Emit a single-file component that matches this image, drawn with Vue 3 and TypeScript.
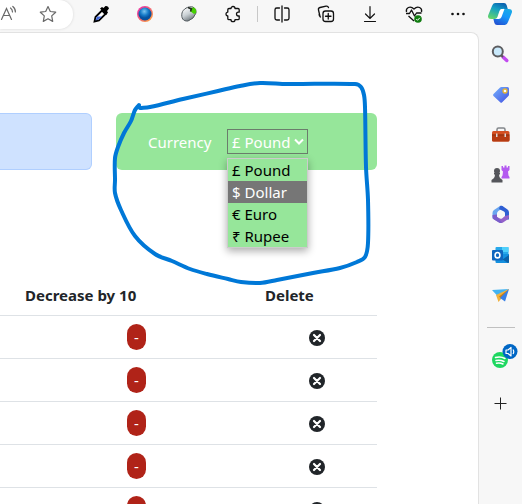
<script setup lang="ts">
import { computed, ref } from 'vue'

interface Currency {
  symbol: string
  name: string
}

const currencies: Currency[] = [
  { symbol: '£', name: 'Pound' },
  { symbol: '$', name: 'Dollar' },
  { symbol: '€', name: 'Euro' },
  { symbol: '₹', name: 'Rupee' },
]
const selected = ref('Pound')
const highlighted = ref('Dollar')
const rows = ref<number[]>([1, 2, 3, 4, 5])

function removeRow(id: number) {
  rows.value = rows.value.filter((r) => r !== id)
}

// Pen stroke drawn over the page, smoothed through its sample points.
const stroke: [number, number][] = [
  [139, 105], [135, 110], [131, 121], [124, 133], [118, 147], [115, 158], [115, 180],
  [115, 193], [121, 210], [135, 236], [155, 254], [172, 261], [190, 269], [207, 274],
  [228, 279], [241, 282], [260, 283], [277, 280], [313, 273], [340, 268], [357, 262],
  [365, 257], [368, 243], [368, 200], [366, 167], [365, 107], [364, 95], [361, 87],
  [355, 84], [287, 84], [260, 83], [240, 86], [218, 91], [183, 99], [150, 107], [140, 108],
]
const strokePath = computed(() => {
  const p = stroke
  let d = `M${p[0][0]} ${p[0][1]}`
  for (let i = 0; i < p.length - 1; i++) {
    const a = p[Math.max(0, i - 1)]
    const b = p[i]
    const c = p[i + 1]
    const e = p[Math.min(p.length - 1, i + 2)]
    const len = Math.hypot(c[0] - b[0], c[1] - b[1])
    const t1 = len / (len + Math.hypot(b[0] - a[0], b[1] - a[1])) / 3
    const t2 = len / (len + Math.hypot(e[0] - c[0], e[1] - c[1])) / 3
    d += `C${b[0] + (c[0] - a[0]) * t1} ${b[1] + (c[1] - a[1]) * t1} ${c[0] - (e[0] - b[0]) * t2} ${c[1] - (e[1] - b[1]) * t2} ${c[0]} ${c[1]}`
  }
  return d
})
</script>

<template>
  <div class="browser">
    <header class="toolbar">
      <div class="address">
        <button class="tool" aria-label="Read aloud">
          <svg width="20" height="20" viewBox="0 0 20 20" fill="none" stroke="#696969" stroke-width="1.2" stroke-linecap="round">
            <path d="M1.500 15.500 6.500 4.500 11.500 15.500M3.200 11.500h6.600M10.500 4q2 1.500 2 4M12.800 2.500q2.800 2.300 2.600 5.500" />
          </svg>
        </button>
        <button class="tool" aria-label="Add to favorites">
          <svg width="20" height="20" viewBox="0 0 20 20" fill="none" stroke="#696969" stroke-width="1.2" stroke-linejoin="round">
            <path d="m10 2.500 2.300 5 5.400.7-4 3.700 1 5.500L10 14.800l-4.700 2.600 1-5.500-4-3.700 5.400-.7z" />
          </svg>
        </button>
      </div>
      <div class="tools">
        <button class="tool" aria-label="Color picker">
          <svg width="20" height="20" viewBox="0 0 20 20">
            <path d="M11 6.500 4.500 13 3.500 17.500 8 16.500 14.500 10z" fill="#fff" stroke="#000" stroke-width="1.800" />
            <path d="M6 12.500h5l-3.500 3-3 1z" fill="#4268d8" />
            <path d="m9 4.500 2-1.500 1.500 1L14.500 2q3-.5 3.500 2.500l-2 2.500 1 1.500-1.800 2.500z" />
          </svg>
        </button>
        <button class="tool" aria-label="Sphere extension">
          <svg width="20" height="20" viewBox="0 0 20 20">
            <defs>
              <linearGradient id="ring" x1="0" y1="0" x2="1" y2="1"><stop offset=".2" stop-color="#ed3c9b" /><stop offset="1" stop-color="#ffac30" /></linearGradient>
              <radialGradient id="ball" cx=".45" cy=".3"><stop offset="0" stop-color="#7dc5ef" /><stop offset=".6" stop-color="#187dca" /><stop offset="1" stop-color="#0752a0" /></radialGradient>
            </defs>
            <circle cx="10" cy="10" r="8" fill="url(#ring)" /><circle cx="10" cy="10" r="6.500" fill="url(#ball)" />
          </svg>
        </button>
        <button class="tool" aria-label="Mouse extension">
          <svg width="20" height="20" viewBox="0 0 20 20">
            <defs><linearGradient id="mouse" x1=".2" y1="0" x2=".7" y2="1"><stop offset="0" stop-color="#fff" /><stop offset=".5" stop-color="#c9d0d4" /><stop offset="1" stop-color="#626a70" /></linearGradient></defs>
            <path d="M3 9C4 5 9 2 14 3q4 2 3 6-2 6-8 8c-5 .5-7-3-6-8z" fill="url(#mouse)" stroke="#555c60" />
            <path d="m11 4 4-.5q3 2 2 5.500l-2 1-4-3z" fill="#45d000" /><path d="m9 3.500 3.500 1.500-1 2.500" fill="none" stroke="#242a25" stroke-width="1.500" />
          </svg>
        </button>
        <button class="tool" aria-label="Extensions">
          <svg width="20" height="20" viewBox="0 0 20 20" fill="none" stroke="#111" stroke-width="1.300" stroke-linejoin="round">
            <path d="M6 4.500h2a2 2 0 0 1 4 0h3q1.200 0 1.200 1.200v2.500h-.8a1.900 1.900 0 0 0 0 3.800h.8v2.500q0 1.200-1.200 1.200h-3a2 2 0 0 1-4 0H6q-1.200 0-1.200-1.200V12H4.500a2 2 0 0 1 0-3.900h.3V5.700q0-1.200 1.200-1.200z" />
          </svg>
        </button>
        <span class="divider"></span>
        <button class="tool" aria-label="Split screen">
          <svg width="20" height="20" viewBox="0 0 20 20" fill="none" stroke="#111" stroke-width="1.300" stroke-linecap="round">
            <path d="M7.500 4H4.800Q3 4 3 5.800v8.400Q3 16 4.800 16h2.700M12.500 4h2.700Q17 4 17 5.800v8.400q0 1.800-1.800 1.800h-2.700M10 2v16" />
          </svg>
        </button>
        <button class="tool" aria-label="Collections">
          <svg width="20" height="20" viewBox="0 0 20 20" fill="none" stroke="#111" stroke-width="1.300" stroke-linecap="round">
            <path d="M4 12.500 2.500 6Q2 4 4 3.500l6-1.300q2-.4 2.500 1.500M4.500 13q-1.500-1-1.400-3" /><rect x="7" y="7" width="10.500" height="10.500" rx="2.500" fill="#f7f7f7" /><path d="M12.250 9.500v5.500M9.500 12.250H15" />
          </svg>
        </button>
        <button class="tool" aria-label="Downloads">
          <svg width="20" height="20" viewBox="0 0 20 20" fill="none" stroke="#111" stroke-width="1.200" stroke-linecap="round">
            <path d="M10 2.500v12M5.500 10l4.500 4.500 4.500-4.500M4.500 17.500h11" />
          </svg>
        </button>
        <button class="tool" aria-label="Browser essentials">
          <svg width="20" height="20" viewBox="0 0 20 20" fill="none" stroke="#111" stroke-width="1.300" stroke-linejoin="round">
            <path d="M2.500 8C1.500 4 6 1 10 5c4-4 8.500-1 7.500 3M2 9.500h3.500l2-3.500 3 6 2-3h5M4.500 12l5.500 5" />
            <circle cx="14" cy="15" r="3.800" fill="#107c10" stroke="none" /><path d="m12.300 15 1.200 1.300 2.300-2.500" stroke="#fff" stroke-width="1" />
          </svg>
        </button>
        <button class="tool" aria-label="Settings and more">
          <svg width="20" height="20" viewBox="0 0 20 20" fill="#111"><circle cx="4.500" cy="10" r="1.300" /><circle cx="10" cy="10" r="1.300" /><circle cx="15.500" cy="10" r="1.300" /></svg>
        </button>
      </div>
      <button class="copilot" aria-label="Copilot">
        <svg width="24" height="24" viewBox="0 0 24 24">
          <defs>
            <linearGradient id="cpa" x1=".7" y1="0" x2=".2" y2="1"><stop offset="0" stop-color="#0b62b0" /><stop offset=".4" stop-color="#12a0c4" /><stop offset="1" stop-color="#64d56a" /></linearGradient>
            <linearGradient id="cpb" x1=".8" y1="0" x2=".3" y2="1"><stop offset="0" stop-color="#19b0e0" /><stop offset=".5" stop-color="#1697fa" /><stop offset="1" stop-color="#2355d3" /></linearGradient>
          </defs>
          <path d="M7 1h9q2 0 2.600 2l1.200 4H14q-2 0-2.600 2l-2 6q-.6 2-2.800 2H3q-4 0-2.700-4L4 4q1-3 3-3z" fill="url(#cpa)" />
          <path d="M17 23H9q-2 0-2.600-2l-1-4h3.600q2 0 2.700-2l3-8q.6-2-.3-2.500L16 7h5q4 0 2.700 4L20 20q-1 3-3 3z" fill="url(#cpb)" />
          <path d="M13.500 7h3l-3 8q-.8 2-2.800 2H8q1.500-.5 2-2l2-6q.5-1.600 1.500-2z" fill="#fff" />
        </svg>
      </button>
    </header>

    <div class="workspace">
      <main class="page">
        <section class="cards">
          <div class="card summary"></div>
          <div class="card currency">
            <label for="currency">Currency</label>
            <div class="picker">
              <select id="currency" v-model="selected">
                <option v-for="c in currencies" :key="c.name" :value="c.name">{{ c.symbol }} {{ c.name }}</option>
              </select>
              <svg class="chevron" width="10" height="8" viewBox="0 0 10 8" fill="none" stroke="#fff" stroke-width="2"><path d="m1 1.500 4 4 4-4" /></svg>
              <ul class="menu" role="listbox" aria-label="Currency">
                <li
                  v-for="c in currencies"
                  :key="c.name"
                  role="option"
                  :aria-selected="c.name === selected"
                  :class="{ active: c.name === highlighted }"
                  @mouseenter="highlighted = c.name"
                  @click="selected = c.name"
                >{{ c.symbol }} {{ c.name }}</li>
              </ul>
            </div>
          </div>
        </section>

        <table class="expenses">
          <thead>
            <tr><th class="decrease">Decrease by 10</th><th>Delete</th></tr>
          </thead>
          <tbody>
            <tr v-for="id in rows" :key="id">
              <td class="decrease"><button class="minus" aria-label="Decrease by 10">-</button></td>
              <td>
                <button class="remove" aria-label="Delete" @click="removeRow(id)">
                  <svg width="16" height="16" viewBox="0 0 16 16"><circle cx="8" cy="8" r="8" fill="#212529" /><path d="m5 5 6 6M11 5l-6 6" stroke="#fff" stroke-width="2.200" stroke-linecap="round" /></svg>
                </button>
              </td>
            </tr>
          </tbody>
        </table>

        <svg class="ink" viewBox="0 32 400 270" width="400" height="270" fill="none" aria-hidden="true">
          <path :d="strokePath" stroke="#0078d7" stroke-width="4" stroke-linecap="round" stroke-linejoin="round" />
        </svg>
      </main>

      <aside class="sidebar">
        <button class="app" aria-label="Search">
          <svg width="20" height="20" viewBox="0 0 20 20"><path d="m12 13 3.800 3.500" stroke="#c24bf0" stroke-width="3.500" stroke-linecap="round" /><path d="m10 11 2 2" stroke="#555" stroke-width="2" /><circle cx="6.800" cy="7.500" r="5" fill="#c9e9fb" stroke="#5d5d60" stroke-width="2" /></svg>
        </button>
        <button class="app" aria-label="Shopping">
          <svg width="20" height="20" viewBox="0 0 20 20"><defs><linearGradient id="tag" x1="0" y1="0" x2="1" y2="1"><stop stop-color="#74b2fd" /><stop offset="1" stop-color="#4352e2" /></linearGradient></defs><path d="M10.500 3h6q1.500 0 1.500 1.500v6q0 1-.8 1.700l-6 6q-1 1-2 0L2.500 12q-1-1 0-2l6.300-6.300Q9.500 3 10.500 3z" fill="url(#tag)" /><circle cx="14" cy="7" r="2" fill="#fff" stroke="#e7b42f" stroke-width="1.300" /></svg>
        </button>
        <button class="app" aria-label="Tools">
          <svg width="20" height="20" viewBox="0 0 20 20"><path d="M6 8V5.500Q6 4 7.500 4h5Q14 4 14 5.500V8" fill="none" stroke="#82868a" stroke-width="1.500" /><rect x="1" y="7" width="17.500" height="10.500" rx="1.500" fill="#d45022" /><path d="M1 11.500h17.500V16q0 1.500-1.500 1.500H2.500Q1 17.500 1 16z" fill="#b63c13" /><path d="M1 11h17.500" stroke="#812707" /><path d="M5 9.500h1.500V13H5zM13.500 9.500H15V13h-1.500z" fill="#d9d9d9" /></svg>
        </button>
        <button class="app" aria-label="Games">
          <svg width="20" height="20" viewBox="0 0 20 20"><path d="M10.500 2H12v1.500h1.500V1.500h2v2H17V2h1.500v4L17 7.500l.5 4 1 1.500v1.500h-8V13l1-1.500.5-4L10.500 6z" fill="#b45bf0" /><g fill="#55565b"><circle cx="6" cy="7" r="3" /><path d="M3 9h6v1.500H8q0 2.500 1.500 4l2 1.500v2.500H.5V16l2-1.500q1.500-1.500 1.500-4H3z" /></g></svg>
        </button>
        <button class="app" aria-label="Microsoft 365">
          <svg width="20" height="20" viewBox="0 0 20 20"><path d="M9 2 3 6Q1.500 7 1.500 9v4.500q0 1.500 1 1.500L6 13V9.500q0-1.500 1.300-2.500L13 3.500 11 2q-1-.6-2 0z" fill="#69a5ef" /><path d="M9 2q1-.6 2.500 0l5 3.500q1.500 1 1.500 3V14q0 1.500-1 2l-3-3V9.500q0-1.300-1-2L8 5z" fill="#2f5ed3" /><path d="M2.500 15 8 18.500q2 1 4 0l4.500-3q1.500-1 1.500-3V11l-4 1-3 2.500q-1 .6-2 0L6 13z" fill="#9361ca" /><path d="m1.500 11 4.500-.5V13l5 5.500q-1.500.8-3 0l-5-3q-1.500-1-1.500-2.500z" fill="#7a5dcb" /></svg>
        </button>
        <button class="app" aria-label="Outlook">
          <svg width="20" height="20" viewBox="0 0 20 20"><rect x="4.500" y="3" width="13" height="14" rx="1" fill="#28a8ea" /><path d="M11 3h6.500v5H11z" fill="#50d0fb" /><path d="M4.500 10h13.500v8q0 1-1 1H5.500q-1 0-1-1z" fill="#1490df" /><path d="m18 11-6.500 4.500L17 19q1 0 1-1z" fill="#0a62aa" /><rect x="1" y="6" width="11" height="10.500" rx="1" fill="#0f66bf" /><ellipse cx="6.500" cy="11.200" rx="2.400" ry="2.700" fill="none" stroke="#fff" stroke-width="1.600" /></svg>
        </button>
        <button class="app" aria-label="Drop">
          <svg width="20" height="20" viewBox="0 0 20 20"><path d="M1 6 18 5 6.500 12z" fill="#43b3f2" /><path d="m18 5-8 9.500L7.500 18 5 11z" fill="#f2b23c" /><path d="M18 5 7.500 18 10 14.500l-2-2z" fill="#c57d1b" /><path d="m18 5-4 12.500-5-3.500z" fill="#367fe8" /></svg>
        </button>
        <span class="rule"></span>
        <button class="app" aria-label="Spotify">
          <svg width="34" height="26" viewBox="0 0 34 26"><circle cx="16" cy="17" r="8" fill="#1ed760" /><path d="M11.500 14.500q5-1.500 9.500 1M12 17.500q4-1 8 1M12.500 20.200q3.500-.8 6.500.8" fill="none" stroke="#fff" stroke-width="1.500" stroke-linecap="round" /><circle cx="26" cy="8.500" r="7.500" fill="#0067c5" /><path d="M22 7h2l3-2.500V13l-3-2.500h-2zM29 6.500q1.500 2.200 0 4.500" fill="none" stroke="#fff" stroke-width="1.200" stroke-linejoin="round" /></svg>
        </button>
        <button class="app" aria-label="Customize">
          <svg width="20" height="20" viewBox="0 0 20 20" stroke="#222" stroke-width="1"><path d="M9.500 3.500v12M3.500 9.500h12" /></svg>
        </button>
      </aside>
    </div>
  </div>
</template>

<style>
body {
  background: #f7f7f7;
}
</style>

<style scoped>
.browser {
  box-sizing: border-box;
  height: 100vh;
  overflow: hidden;
  display: flex;
  flex-direction: column;
  background: #f7f7f7;
  color: #212529;
  font: 15px/24px "Noto Sans", "Open Sans", sans-serif;
}
button {
  display: flex;
  align-items: center;
  justify-content: center;
  padding: 0;
  border: 0;
  background: none;
  color: inherit;
  font: inherit;
}
button svg {
  flex: none;
}
.toolbar {
  display: flex;
  height: 32px;
  align-items: flex-start;
}
.address {
  box-sizing: border-box;
  display: flex;
  width: 73px;
  height: 29px;
  justify-content: space-between;
  padding-right: 15px;
  background: #fff;
  border-radius: 0 14px 14px 0;
  box-shadow: 0 0 3px #0002;
}
.tool {
  width: 20px;
  height: 28px;
}
.tools {
  flex: 1;
  display: flex;
  align-items: center;
  justify-content: space-between;
  padding-left: 18px;
}
.divider {
  width: 1px;
  height: 16px;
  margin: 0 -10px;
  background: #c8c8c8;
}
.copilot {
  width: 24px;
  height: 28px;
  margin: 0 10px 0 20px;
}
.workspace {
  flex: 1;
  display: flex;
  min-height: 0;
}
.page {
  position: relative;
  flex: 1;
  min-width: 0;
  overflow: hidden;
  padding: 80px 101px 0 0;
  background: #fff;
  border: solid #e2e2e2;
  border-width: 1px 1px 0 0;
  border-radius: 0 8px 0 0;
}
.cards {
  display: grid;
  grid-template-columns: 92fr 261fr;
  gap: 24px;
}
.card {
  box-sizing: border-box;
  height: 57px;
  border-radius: 6px;
}
.summary {
  background: #cfe2ff;
  border: 1px solid #b0cfff;
  border-left: 0;
  border-radius: 0 6px 6px 0;
}
.currency {
  display: flex;
  align-items: center;
  gap: 16px;
  padding-left: 32px;
  background: #96e69a;
  color: #fff;
}
.currency label {
  width: 63px;
}
.picker {
  position: relative;
  width: 81px;
}
select {
  appearance: none;
  display: block;
  box-sizing: border-box;
  width: 100%;
  height: 25px;
  padding: 0 0 0 4px;
  border: 1px solid #6b7d6c;
  border-radius: 0;
  outline: 0;
  background: #96e69a;
  color: #fff;
  font: inherit;
}
.chevron {
  position: absolute;
  top: 9px;
  right: 4px;
  pointer-events: none;
}
.menu {
  position: absolute;
  z-index: 1;
  top: 29px;
  left: 0;
  box-sizing: border-box;
  width: 100%;
  margin: 0;
  padding: 0;
  border: 1px solid #ccc;
  background: #96e69a;
  box-shadow: 0 3px 8px #0005;
  color: #000;
  line-height: 22px;
  list-style: none;
}
.menu li {
  padding-left: 4px;
}
.menu .active {
  background: #767676;
  color: #fff;
}
.expenses {
  width: 100%;
  margin-top: 108px;
  border-collapse: collapse;
  table-layout: fixed;
}
th,
td {
  padding: 0 0 0 8px;
  border-bottom: 1px solid #dee2e6;
  text-align: left;
}
th {
  height: 33px;
  padding-bottom: 4px;
}
td {
  height: 42px;
}
.decrease {
  width: 232px;
  padding-left: 25px;
}
.minus {
  width: 19px;
  height: 26px;
  margin-left: 102px;
  border-radius: 10px;
  background: #b02318;
  color: #fff;
}
.remove {
  width: 16px;
  height: 16px;
  margin: 2px 0 0 44px;
}
.ink {
  position: absolute;
  z-index: 2;
  top: -1px;
  left: 0;
  pointer-events: none;
}
.sidebar {
  display: flex;
  flex-direction: column;
  align-items: center;
  width: 43px;
  padding-top: 2px;
}
.app {
  flex: none;
  width: 28px;
  height: 40px;
}
.app:last-child {
  height: 56px;
}
.rule {
  flex: none;
  width: 28px;
  height: 1px;
  margin: 13px 0 8px;
  background: #c0c0c0;
}
</style>
